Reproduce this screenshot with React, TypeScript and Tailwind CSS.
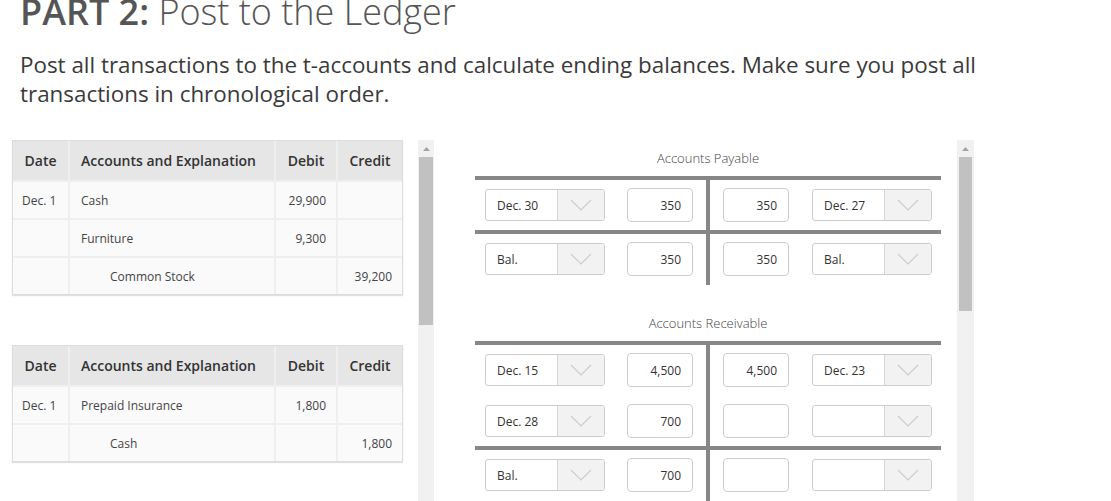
import React from 'react';

type JournalRow = { date?: string; account: string; indent?: boolean; debit?: string; credit?: string };
type Entry = { date: string; amount: string };

const journal1: JournalRow[] = [
  { date: 'Dec. 1', account: 'Cash', debit: '29,900' },
  { account: 'Furniture', debit: '9,300' },
  { account: 'Common Stock', indent: true, credit: '39,200' },
];

const journal2: JournalRow[] = [
  { date: 'Dec. 1', account: 'Prepaid Insurance', debit: '1,800' },
  { account: 'Cash', indent: true, credit: '1,800' },
];

const Journal: React.FC<{ rows: JournalRow[] }> = ({ rows }) => (
  <div className="w-[391px] border border-[#dcdcdc] bg-[#efefef] shadow-[0_1px_1px_rgba(0,0,0,0.12)]">
    <div className="grid grid-cols-[55px_204px_60px_64px] gap-[2px]">
      {/* Header */}
      <div className="h-[39px] bg-[#e6e6e6] flex items-center justify-center text-[14px] font-semibold text-[#333]">Date</div>
      <div className="h-[39px] bg-[#e6e6e6] flex items-center pl-[11px] text-[14px] font-semibold text-[#333]">Accounts and Explanation</div>
      <div className="h-[39px] bg-[#e6e6e6] flex items-center justify-center text-[14px] font-semibold text-[#333]">Debit</div>
      <div className="h-[39px] bg-[#e6e6e6] flex items-center justify-center text-[14px] font-semibold text-[#333]">Credit</div>
      {rows.map((r, i) => (
        <React.Fragment key={i}>
          <div className="h-[36px] bg-[#fafafa] flex items-center pl-[9px] pt-[1px] text-[12px] text-[#444]">{r.date}</div>
          <div className={`h-[36px] bg-[#fafafa] flex items-center pt-[1px] text-[12px] text-[#444] ${r.indent ? 'pl-[40px]' : 'pl-[11px]'}`}>{r.account}</div>
          <div className="h-[36px] bg-[#fafafa] flex items-center justify-end pr-[10px] pt-[1px] text-[12px] text-[#444]">{r.debit}</div>
          <div className="h-[36px] bg-[#fafafa] flex items-center justify-end pr-[10px] pt-[1px] text-[12px] text-[#444]">{r.credit}</div>
        </React.Fragment>
      ))}
    </div>
  </div>
);

const Scrollbar: React.FC<{ wide?: boolean; thumb: string }> = ({ wide, thumb }) => (
  <div className={`h-full bg-[#f1f1f1] flex flex-col items-center ${wide ? 'w-[17px]' : 'w-[16px]'}`}>
    <div className="h-[17px] flex items-center justify-center">
      <svg width="7" height="4" viewBox="0 0 7 4">
        <polygon points="3.5,0 7,4 0,4" fill="#a3a3a3" />
      </svg>
    </div>
    <div className={`bg-[#c1c1c1] ${wide ? 'w-[13px]' : 'w-[14px]'} ${thumb}`} />
  </div>
);

const Select: React.FC<{ value: string }> = ({ value }) => (
  <div className="w-[120px] h-[32px] flex border border-[#cccccc] rounded-[3px] overflow-hidden bg-white">
    <div className="flex-1 flex items-center pl-[11px] pt-[1px] text-[12px] text-[#333]">{value}</div>
    <div className="w-[47px] bg-[#f2f2f2] border-l border-[#d6d6d6] flex items-center justify-center">
      <svg width="22" height="12" viewBox="0 0 22 12">
        <path d="M1 1 L11 11 L21 1" fill="none" stroke="#cccccc" strokeWidth="1.2" />
      </svg>
    </div>
  </div>
);

const Amount: React.FC<{ value: string }> = ({ value }) => (
  <div className="w-[66px] h-[34px] border border-[#cccccc] rounded-[4px] bg-white flex items-center justify-end pr-[11px] pt-[1px] text-[12px] text-[#333]">
    {value}
  </div>
);

const LeftRow: React.FC<{ e: Entry }> = ({ e }) => (
  <div className="h-[34px] flex items-center pl-[10px] gap-[22px]">
    <Select value={e.date} />
    <Amount value={e.amount} />
  </div>
);

const RightRow: React.FC<{ e: Entry }> = ({ e }) => (
  <div className="h-[34px] flex items-center pl-[13px] gap-[23px]">
    <Amount value={e.amount} />
    <Select value={e.date} />
  </div>
);

const TAccount: React.FC<{ title: string; debits: Entry[]; credits: Entry[]; balL: Entry; balR: Entry; className?: string }> = ({
  title,
  debits,
  credits,
  balL,
  balR,
  className,
}) => (
  <div className={`w-[466px] ${className ?? ''}`}>
    <div className="h-[18px] leading-[18px] mb-[9px] text-center text-[13px] font-light text-[#444]">{title}</div>
    <div className="h-[4px] bg-[#878787]" />
    <div className="flex">
      <div className="w-[231px] flex flex-col gap-[17px] py-[8px]">
        {debits.map((e, i) => (
          <LeftRow key={i} e={e} />
        ))}
      </div>
      <div className="w-[4px] bg-[#878787]" />
      <div className="w-[231px] flex flex-col gap-[17px] py-[8px]">
        {credits.map((e, i) => (
          <RightRow key={i} e={e} />
        ))}
      </div>
    </div>
    <div className="h-[4px] bg-[#878787]" />
    <div className="flex">
      <div className="w-[231px] pt-[8px] pb-[9px]">
        <LeftRow e={balL} />
      </div>
      <div className="w-[4px] bg-[#878787]" />
      <div className="w-[231px] pt-[8px] pb-[9px]">
        <RightRow e={balR} />
      </div>
    </div>
  </div>
);

export default function App() {
  return (
    <div className="w-[1111px] h-[501px] overflow-hidden bg-white font-['Open_Sans',sans-serif]">
      <div className="px-5">
        <h1 className="-mt-[6px] text-[36px] leading-9 text-[#555]">
          <span className="font-semibold">PART 2:</span> <span className="font-light">Post to the Ledger</span>
        </h1>
        <p className="mt-5 w-[1000px] text-[22.4px] leading-[29px] text-[#3a3a3a]">
          Post all transactions to the t-accounts and calculate ending balances. Make sure you post all transactions in chronological order.
        </p>
      </div>

      <div className="mt-[32px] h-[361px] flex">
        {/* Journal entries */}
        <div className="w-[440px] h-full flex">
          <div className="w-[418px] pl-3 flex flex-col gap-[50px]">
            <Journal rows={journal1} />
            <Journal rows={journal2} />
          </div>
          <Scrollbar thumb="h-[168px]" />
        </div>

        {/* T-accounts */}
        <div className="h-full flex">
          <div className="w-[517px] pl-[35px] pt-[9px]">
            <TAccount
              title="Accounts Payable"
              debits={[{ date: 'Dec. 30', amount: '350' }]}
              credits={[{ date: 'Dec. 27', amount: '350' }]}
              balL={{ date: 'Bal.', amount: '350' }}
              balR={{ date: 'Bal.', amount: '350' }}
            />
            <TAccount
              className="mt-[29px]"
              title="Accounts Receivable"
              debits={[
                { date: 'Dec. 15', amount: '4,500' },
                { date: 'Dec. 28', amount: '700' },
              ]}
              credits={[
                { date: 'Dec. 23', amount: '4,500' },
                { date: '', amount: '' },
              ]}
              balL={{ date: 'Bal.', amount: '700' }}
              balR={{ date: '', amount: '' }}
            />
          </div>
          <Scrollbar wide thumb="h-[154px]" />
        </div>
      </div>
    </div>
  );
}
